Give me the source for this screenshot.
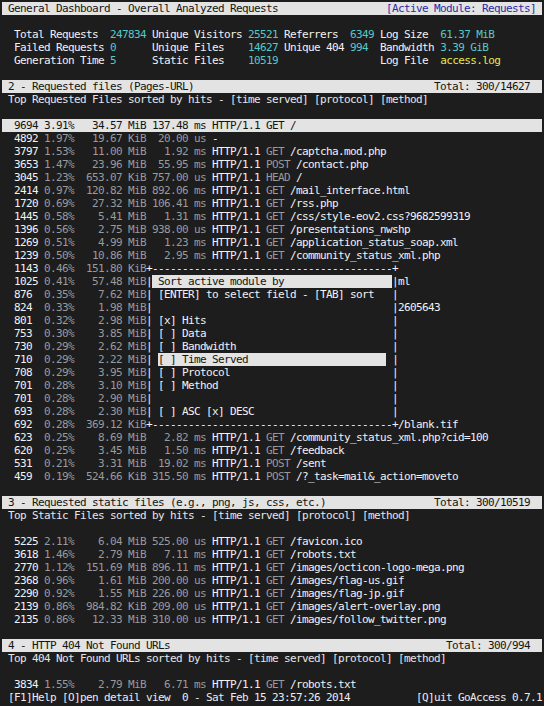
import React from 'react';

type Seg = [string, string?];

const BRIGHT = 'text-[#f2f2f2]';
const DIM = 'text-[#9a9a9a]';
const CYAN = 'text-[#55c9c9]';
const YELLOW = 'text-[#e8e84c]';
const HL = 'bg-[#e3e3e3] text-[#141414]';
const COLS = 90;

interface Hit {
  hits: string;
  pct: string;
  bw: string;
  ts: string;
  proto?: string;
  method?: string;
  path?: string;
}

const lead = (h: Hit): Seg[] => [
  ['  ' + h.hits.padEnd(4) + ' ', BRIGHT],
  [h.pct + ' ', DIM],
  [h.bw.padStart(11), DIM],
];

const dataRow = (h: Hit): Seg[] => {
  const segs: Seg[] = [...lead(h), [' ' + h.ts.padStart(9) + ' ', DIM]];
  if (!h.proto) {
    segs.push(['-', BRIGHT]);
    return segs;
  }
  segs.push([h.proto + ' ', BRIGHT]);
  segs.push([h.method + ' ', DIM]);
  segs.push([h.path || '', BRIGHT]);
  return segs;
};

const requested: Hit[] = [
  { hits: '4892', pct: '1.97%', bw: '19.67 KiB', ts: '20.00 us' },
  { hits: '3797', pct: '1.53%', bw: '11.00 MiB', ts: '1.92 ms', proto: 'HTTP/1.1', method: 'GET', path: '/captcha.mod.php' },
  { hits: '3653', pct: '1.47%', bw: '23.96 MiB', ts: '55.95 ms', proto: 'HTTP/1.1', method: 'POST', path: '/contact.php' },
  { hits: '3045', pct: '1.23%', bw: '653.07 KiB', ts: '757.00 us', proto: 'HTTP/1.1', method: 'HEAD', path: '/' },
  { hits: '2414', pct: '0.97%', bw: '120.82 MiB', ts: '892.06 ms', proto: 'HTTP/1.1', method: 'GET', path: '/mail_interface.html' },
  { hits: '1720', pct: '0.69%', bw: '27.32 MiB', ts: '106.41 ms', proto: 'HTTP/1.1', method: 'GET', path: '/rss.php' },
  { hits: '1445', pct: '0.58%', bw: '5.41 MiB', ts: '1.31 ms', proto: 'HTTP/1.1', method: 'GET', path: '/css/style-eov2.css?9682599319' },
  { hits: '1396', pct: '0.56%', bw: '2.75 MiB', ts: '938.00 us', proto: 'HTTP/1.1', method: 'GET', path: '/presentations_nwshp' },
  { hits: '1269', pct: '0.51%', bw: '4.99 MiB', ts: '1.23 ms', proto: 'HTTP/1.1', method: 'GET', path: '/application_status_soap.xml' },
  { hits: '1239', pct: '0.50%', bw: '10.86 MiB', ts: '2.95 ms', proto: 'HTTP/1.1', method: 'GET', path: '/community_status_xml.php' },
];

// rows partly covered by the sort dialog: hits, pct, bw, dialog content, highlight, text right of the box
const boxed: Array<[string, string, string, string, string, string]> = [
  ['1143', '0.46%', '151.80 KiB', 'top', '', ''],
  ['1025', '0.41%', '57.48 MiB', ' Sort active module by', 'full', 'ml'],
  ['876', '0.35%', '7.62 MiB', ' [ENTER] to select field - [TAB] sort', '', ''],
  ['824', '0.33%', '1.98 MiB', '', '', '2605643'],
  ['801', '0.32%', '2.98 MiB', ' [x] Hits', '', ''],
  ['753', '0.30%', '3.85 MiB', ' [ ] Data', '', ''],
  ['730', '0.29%', '2.62 MiB', ' [ ] Bandwidth', '', ''],
  ['710', '0.29%', '2.22 MiB', ' [ ] Time Served', 'item', ''],
  ['708', '0.29%', '3.95 MiB', ' [ ] Protocol', '', ''],
  ['701', '0.28%', '3.10 MiB', ' [ ] Method', '', ''],
  ['701', '0.28%', '2.90 MiB', '', '', ''],
  ['693', '0.28%', '2.30 MiB', ' [ ] ASC [x] DESC', '', ''],
  ['692', '0.28%', '369.12 KiB', 'bottom', '', '/blank.tif'],
];

const afterBox: Hit[] = [
  { hits: '623', pct: '0.25%', bw: '8.69 MiB', ts: '2.82 ms', proto: 'HTTP/1.1', method: 'GET', path: '/community_status_xml.php?cid=100' },
  { hits: '620', pct: '0.25%', bw: '3.45 MiB', ts: '1.50 ms', proto: 'HTTP/1.1', method: 'GET', path: '/feedback' },
  { hits: '531', pct: '0.21%', bw: '3.31 MiB', ts: '19.02 ms', proto: 'HTTP/1.1', method: 'POST', path: '/sent' },
  { hits: '459', pct: '0.19%', bw: '524.66 KiB', ts: '315.50 ms', proto: 'HTTP/1.1', method: 'POST', path: '/?_task=mail&_action=moveto' },
];

const statics: Hit[] = [
  { hits: '5225', pct: '2.11%', bw: '6.04 MiB', ts: '525.00 us', proto: 'HTTP/1.1', method: 'GET', path: '/favicon.ico' },
  { hits: '3618', pct: '1.46%', bw: '2.79 MiB', ts: '7.11 ms', proto: 'HTTP/1.1', method: 'GET', path: '/robots.txt' },
  { hits: '2770', pct: '1.12%', bw: '151.69 MiB', ts: '896.11 ms', proto: 'HTTP/1.1', method: 'GET', path: '/images/octicon-logo-mega.png' },
  { hits: '2368', pct: '0.96%', bw: '1.61 MiB', ts: '200.00 us', proto: 'HTTP/1.1', method: 'GET', path: '/images/flag-us.gif' },
  { hits: '2290', pct: '0.92%', bw: '1.55 MiB', ts: '226.00 us', proto: 'HTTP/1.1', method: 'GET', path: '/images/flag-jp.gif' },
  { hits: '2139', pct: '0.86%', bw: '984.82 KiB', ts: '209.00 us', proto: 'HTTP/1.1', method: 'GET', path: '/images/alert-overlay.png' },
  { hits: '2135', pct: '0.86%', bw: '12.33 MiB', ts: '310.00 us', proto: 'HTTP/1.1', method: 'GET', path: '/images/follow_twitter.png' },
];

const Line: React.FC<{ segs?: Seg[]; bar?: boolean }> = ({ segs = [], bar }) => (
  <div className={`h-[13px] w-[540px] whitespace-pre leading-[13px] ${bar ? HL : ''}`}>
    {segs.map(([t, c], i) =>
      c ? (
        <span key={i} className={c}>
          {t}
        </span>
      ) : (
        <React.Fragment key={i}>{t}</React.Fragment>
      )
    )}
  </div>
);

// left text from col 1, right text ending on column `endCol`
const barLine = (left: string, right: string, endCol: number, rightCls = ''): Seg[] => {
  const start = endCol - right.length + 1;
  const pad = start - 1 - left.length;
  return [[' ' + left + ' '.repeat(Math.max(pad, 1))], [right, rightCls], [' '.repeat(COLS - endCol - 1)]];
};

const boxLine = (b: (typeof boxed)[number]): Seg[] => {
  const [hits, pct, bw, content, hl, trail] = b;
  const segs = lead({ hits, pct, bw, ts: '' });
  if (content === 'top' || content === 'bottom') {
    segs.push(['+' + '-'.repeat(40) + '+', BRIGHT]);
    if (trail) segs.push([trail, BRIGHT]);
    return segs;
  }
  segs.push(['|', BRIGHT]);
  if (hl === 'full') {
    segs.push([content.padEnd(40), HL]);
  } else if (hl === 'item') {
    segs.push([' ', BRIGHT]);
    segs.push([content.slice(1).padEnd(38), HL]);
    segs.push([' ', BRIGHT]);
  } else {
    segs.push([content.padEnd(40), BRIGHT]);
  }
  segs.push(['|', BRIGHT]);
  if (trail) segs.push([trail, BRIGHT]);
  return segs;
};

// overall metrics: [label, width, value, valueWidth, colour]
type Metric = [string, number, string, number, string];
const metricRows: Metric[][] = [
  [
    ['Total Requests', 16, '247834', 6, CYAN],
    ['Unique Visitors', 16, '25521', 5, CYAN],
    ['Referrers', 11, '6349', 4, CYAN],
    ['Log Size', 10, '61.37 MiB', 9, CYAN],
  ],
  [
    ['Failed Requests', 16, '0', 6, CYAN],
    ['Unique Files', 16, '14627', 5, CYAN],
    ['Unique 404', 11, '994', 4, CYAN],
    ['Bandwidth', 10, '3.39 GiB', 9, CYAN],
  ],
  [
    ['Generation Time', 16, '5', 6, CYAN],
    ['Static Files', 16, '10519', 5, CYAN],
    ['', 11, '', 4, CYAN],
    ['Log File', 10, 'access.log', 10, YELLOW],
  ],
];

const metricLine = (row: Metric[]): Seg[] => {
  const segs: Seg[] = [[' ']];
  row.forEach(([label, w, value, vw, cls]) => {
    segs.push([' ' + label.padEnd(w), BRIGHT]);
    segs.push([value.padEnd(vw), cls]);
  });
  return segs;
};

const header = (s: string): Seg[] => [[' ' + s, 'text-[#e6e6e6]']];

export default function App() {
  const top: Hit = { hits: '9694', pct: '3.91%', bw: '34.57 MiB', ts: '137.48 ms', proto: 'HTTP/1.1', method: 'GET', path: '/' };
  const first = dataRow(top).map(([t]) => [t] as Seg);

  return (
    <div
      className="min-h-[706px] w-[544px] bg-[#1d1d1d] p-[2px] text-[11px] tracking-[-0.622px] text-[#e6e6e6]"
      style={{ fontFamily: '"DejaVu Sans Mono", "Liberation Mono", monospace' }}
    >
      <Line bar segs={barLine('General Dashboard - Overall Analyzed Requests', '[Active Module: Requests]', 88, 'text-[#2a2aa6]')} />
      <Line />
      {metricRows.map((r, i) => (
        <Line key={i} segs={metricLine(r)} />
      ))}
      <Line />

      <Line bar segs={barLine('2 - Requested files (Pages-URL)', 'Total: 300/14627', 87)} />
      <Line segs={header('Top Requested Files sorted by hits - [time served] [protocol] [method]')} />
      <Line />
      <Line bar segs={first} />
      {requested.map((h, i) => (
        <Line key={i} segs={dataRow(h)} />
      ))}
      {boxed.map((b, i) => (
        <Line key={'b' + i} segs={boxLine(b)} />
      ))}
      {afterBox.map((h, i) => (
        <Line key={'a' + i} segs={dataRow(h)} />
      ))}
      <Line />

      <Line bar segs={barLine('3 - Requested static files (e.g., png, js, css, etc.)', 'Total: 300/10519', 87)} />
      <Line segs={header('Top Static Files sorted by hits - [time served] [protocol] [method]')} />
      <Line />
      {statics.map((h, i) => (
        <Line key={'s' + i} segs={dataRow(h)} />
      ))}
      <Line />

      <Line bar segs={barLine('4 - HTTP 404 Not Found URLs', 'Total: 300/994', 87)} />
      <Line segs={header('Top 404 Not Found URLs sorted by hits - [time served] [protocol] [method]')} />
      <Line />
      <Line
        segs={dataRow({ hits: '3834', pct: '1.55%', bw: '2.79 MiB', ts: '6.71 ms', proto: 'HTTP/1.1', method: 'GET', path: '/robots.txt' })}
      />
      <Line
        segs={[
          [' [F1]Help [O]pen detail view  0 - Sat Feb 15 23:57:26 2014', 'text-[#ececec]'],
          ['           [Q]uit GoAccess 0.7.1', 'text-[#ececec]'],
        ]}
      />
    </div>
  );
}
